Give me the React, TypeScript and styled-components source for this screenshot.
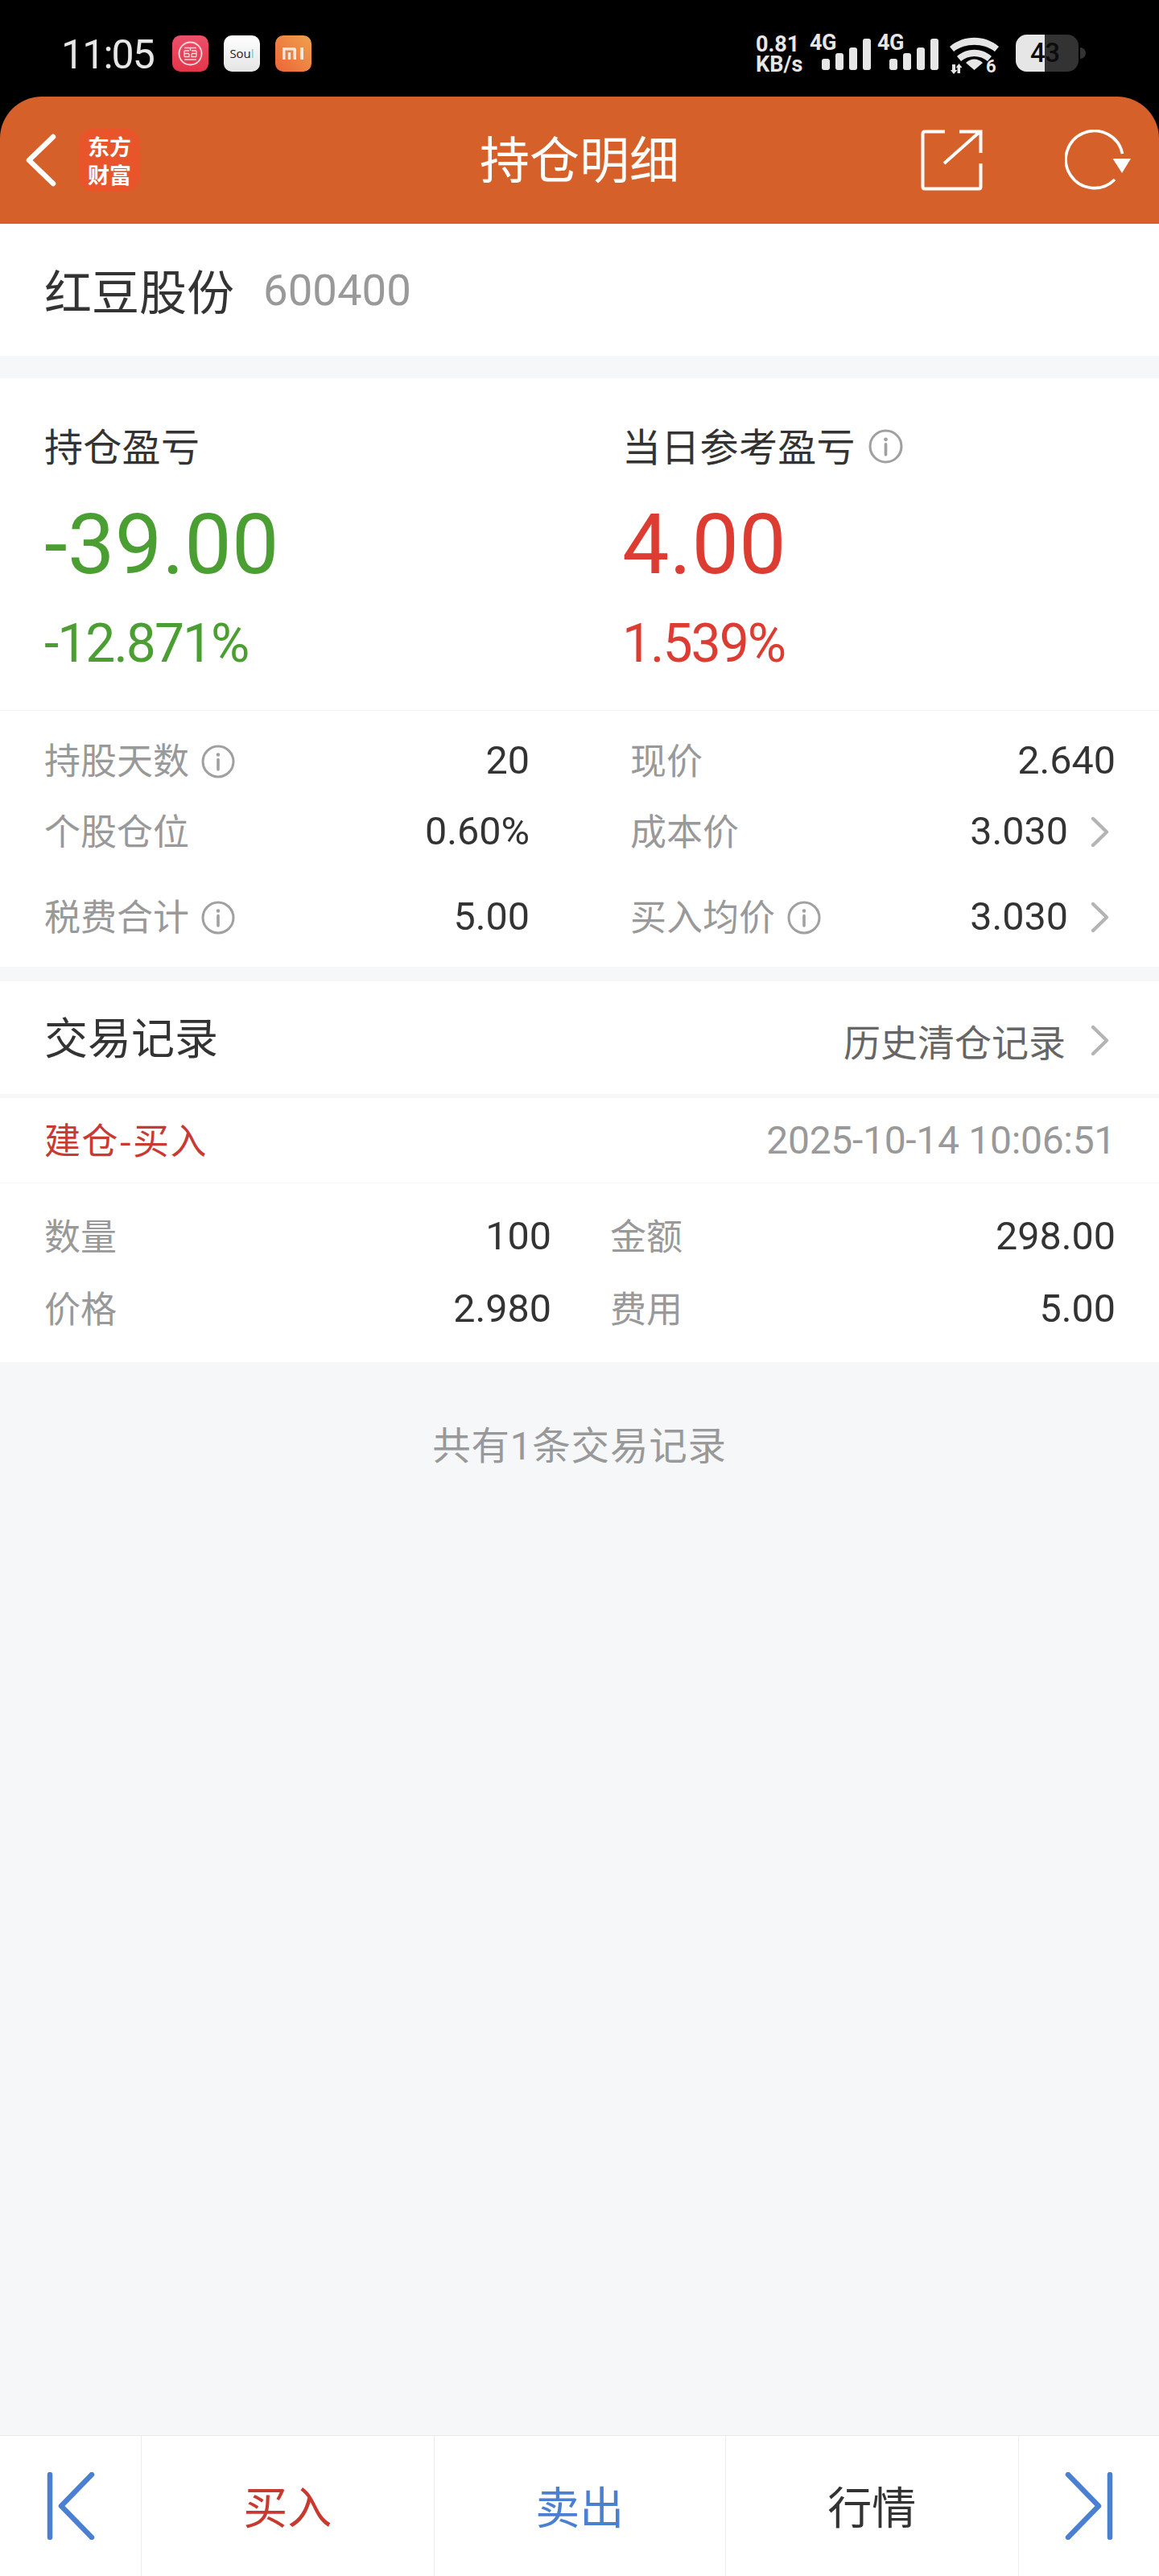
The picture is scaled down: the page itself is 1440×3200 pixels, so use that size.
import React from 'react';
import styled, { createGlobalStyle } from 'styled-components';

const GlobalStyle = createGlobalStyle`
  html, body { margin: 0; padding: 0; background: #f6f7f9; }
  * { box-sizing: border-box; }
  body { font-family: Roboto, "Noto Sans CJK SC", sans-serif; }
`;

const CJK = `"Noto Sans CJK SC", Roboto, sans-serif`;
const NUM = `Roboto, "Noto Sans CJK SC", sans-serif`;

const Page = styled.div`
  width: 1440px;
  height: 3200px;
  display: flex;
  flex-direction: column;
  background: #f6f7f9;
  overflow: hidden;
`;

/* ---------- status bar ---------- */
const StatusBar = styled.div`
  height: 120px;
  flex: none;
  background: #000;
  display: flex;
  align-items: flex-start;
  padding: 43px 91px 0 76px;
  color: #e6e6e6;
`;
const Clock = styled.div`
  margin-top: 2px;
  font: 400 50px/46px ${NUM};
  letter-spacing: -1.9px;
  width: 138px;
`;
const AppIcon = styled.div<{ $bg: string }>`
  width: 45px;
  height: 45px;
  margin: 1px 19px 0 0;
  border-radius: 10px;
  background: ${(p) => p.$bg};
  display: flex;
  align-items: center;
  justify-content: center;
`;
const SoulText = styled.span`
  font: 400 15px/1 "Open Sans", sans-serif;
  color: #222;
  & > i { font-style: normal; color: #6fd0b0; }
`;
const StatusRight = styled.div`
  margin-left: auto;
  display: flex;
  align-items: flex-start;
`;
const Speed = styled.div`
  width: 61px;
  margin-right: 6px;
  font: 700 27px/25px ${NUM};
  white-space: nowrap;
`;
const Signal = styled.div`
  width: 74px;
  height: 44px;
  margin-right: 10px;
  display: flex;
  align-items: flex-end;
  position: relative;
`;
const SignalLabel = styled.span`
  position: absolute;
  left: 0;
  top: 0;
  font: 700 27px/21px ${NUM};
  letter-spacing: -0.4px;
`;
const Bars = styled.div`
  margin-left: 15px;
  display: flex;
  align-items: flex-end;
  gap: 7px;
`;
const Bar = styled.span<{ $h: number }>`
  width: 10px;
  height: ${(p) => p.$h}px;
  border-radius: 3px;
  background: #e6e6e6;
`;
const Wifi = styled.svg`
  width: 62px;
  height: 46px;
  margin: 4px 0 0 6px;
  flex: none;
  overflow: visible;
`;
const Battery = styled.div`
  width: 78px;
  height: 46px;
  margin: 0 0 0 20px;
  border-radius: 14px;
  overflow: hidden;
  position: relative;
  display: flex;
  background: #333;
`;
const BatteryFill = styled.div`
  width: 36px;
  background: #e6e6e6;
`;
const BatteryText = styled.span`
  position: absolute;
  left: 18px;
  top: 0;
  font: 500 33px/46px ${NUM};
  color: #0c0c0c;
  letter-spacing: -0.5px;
`;
const BatteryNub = styled.div`
  width: 7px;
  height: 14px;
  margin: 16px 0 0 2px;
  background: #333;
  border-radius: 0 7px 7px 0;
`;

/* ---------- header ---------- */
const Header = styled.header`
  height: 158px;
  flex: none;
  background: #000;
`;
const HeaderInner = styled.div`
  height: 100%;
  background: #d66029;
  border-radius: 52px 52px 0 0;
  display: flex;
  align-items: center;
  position: relative;
  padding: 0 33px 0 30px;
`;
const Brand = styled.div`
  width: 76px;
  height: 78px;
  margin-left: 28px;
  background: #e9552b;
  border-radius: 18px;
  display: flex;
  flex-direction: column;
  align-items: center;
  justify-content: center;
  font: 700 27px/35px ${CJK};
  color: #fff;
`;
const Title = styled.h1`
  position: absolute;
  left: 0;
  right: 0;
  top: 40px;
  margin: 0;
  text-align: center;
  font: 400 62px/70px ${CJK};
  color: #fff;
  pointer-events: none;
`;
const HeaderActions = styled.div`
  margin-left: auto;
  display: flex;
  align-items: center;
  gap: 102px;
`;

/* ---------- stock row ---------- */
const StockRow = styled.section`
  height: 164px;
  flex: none;
  background: #fff;
  display: flex;
  align-items: center;
  padding: 0 55px;
`;
const StockName = styled.span`
  font: 400 59px/70px ${CJK};
  color: #333;
`;
const StockCode = styled.span`
  font: 400 54.5px/70px ${NUM};
  color: #999;
  margin-left: 36px;
`;

/* ---------- summary ---------- */
const Summary = styled.section`
  margin-top: 28px;
  height: 413px;
  flex: none;
  background: #fff;
  border-bottom: 1px solid #f3f3f4;
  display: grid;
  grid-template-columns: 718px 1fr;
  padding: 52px 0 0 55px;
`;
const SummaryCol = styled.div`
  display: flex;
  flex-direction: column;
`;
const SummaryLabel = styled.div`
  display: flex;
  align-items: center;
  gap: 16px;
  font: 400 48px/60px ${CJK};
  letter-spacing: 0.3px;
  color: #333;
`;
const BigNumber = styled.div<{ $color: string }>`
  margin-top: 40px;
  font: 400 104px/110px ${NUM};
  letter-spacing: 0.3px;
  color: ${(p) => p.$color};
`;
const Percent = styled.div<{ $color: string }>`
  margin-top: 28px;
  font: 400 66px/80px ${NUM};
  letter-spacing: -2px;
  color: ${(p) => p.$color};
`;

/* ---------- metrics ---------- */
const Metrics = styled.section`
  height: 318px;
  flex: none;
  background: #fff;
  padding: 18px 54px 0 55px;
  display: grid;
  grid-template-columns: 603px 603px;
  grid-template-rows: 88px 88px 124px;
  column-gap: 125px;
`;
const Cell = styled.div`
  display: flex;
  align-items: center;
`;
const CellLabel = styled.span`
  margin-top: -4px;
  display: flex;
  align-items: center;
  gap: 15px;
  font: 400 45px/60px ${CJK};
  color: #999;
`;
const CellValue = styled.span`
  margin-left: auto;
  font: 400 48.5px/60px ${NUM};
  color: #333;
`;
const CellChevron = styled.svg`
  width: 25px;
  height: 41px;
  margin: 0 7px 0 27px;
  flex: none;
`;
const InfoSvg = styled.svg`
  margin-top: 5px;
  flex: none;
`;

/* ---------- trades ---------- */
const TradeHeader = styled.section`
  margin-top: 18px;
  height: 140px;
  flex: none;
  background: #fff;
  display: flex;
  align-items: center;
  padding: 0 54px 0 55px;
`;
const TradeTitle = styled.h2`
  margin: -5px 0 0;
  font: 400 54px/70px ${CJK};
  color: #333;
`;
const HistoryLink = styled.span`
  margin: 6px 0 0 auto;
  display: flex;
  align-items: center;
  font: 400 46px/60px ${CJK};
  color: #666;
  & > svg { margin-left: 30px; }
`;
const RecordHead = styled.div`
  margin-top: 5px;
  height: 106px;
  flex: none;
  background: #fff;
  border-bottom: 1px solid #f8f8f9;
  display: flex;
  align-items: center;
  justify-content: space-between;
  padding: 0 54px 0 55px;
`;
const RecordType = styled.span`
  margin-top: -3px;
  font: 400 45px/60px ${CJK};
  letter-spacing: 1.500px;
  color: #c83a32;
`;
const RecordTime = styled.span`
  font: 400 48px/60px ${NUM};
  letter-spacing: -0.3px;
  color: #999;
`;
const RecordBody = styled.div`
  height: 222px;
  flex: none;
  background: #fff;
  padding: 21px 54px 0 55px;
  display: grid;
  grid-template-columns: 630px 628px;
  grid-template-rows: 90px 90px;
  column-gap: 73px;
`;
const FootNote = styled.div`
  margin-top: 75px;
  text-align: center;
  font: 400 47.5px/60px ${NUM};
  letter-spacing: 0.8px;
  color: #999;
`;

/* ---------- bottom bar ---------- */
const BottomBar = styled.nav`
  margin-top: auto;
  height: 175px;
  flex: none;
  background: #fff;
  border-top: 1px solid #e8e9ec;
  display: grid;
  grid-template-columns: 175px 363.5px 362.5px 363.5px 175.5px;
`;
const BottomCell = styled.div<{ $color?: string }>`
  display: flex;
  align-items: center;
  justify-content: center;
  padding-bottom: 4px;
  font: 400 55px/60px ${CJK};
  color: ${(p) => p.$color || '#333'};
  border-left: 1px solid #ebecef;
  &:first-child { border-left: 0; padding-bottom: 0; }
  &:last-child { padding-bottom: 0; }
`;

/* ---------- icons ---------- */
const InfoIcon = ({ size = 42 }: { size?: number }) => (
  <InfoSvg width={size} height={size} viewBox="0 0 42 42" fill="none">
    <circle cx="21" cy="21" r="19" stroke="#a0a0a0" strokeWidth="3" />
    <circle cx="21" cy="12.5" r="2.3" fill="#a0a0a0" />
    <path d="M21 18.5V31" stroke="#a0a0a0" strokeWidth="3.6" strokeLinecap="round" />
  </InfoSvg>
);

const Chevron = () => (
  <CellChevron viewBox="0 0 25 41" fill="none">
    <path d="M4 4L21 20.5L4 37" stroke="#b4b4b4" strokeWidth="4.4" strokeLinecap="round" strokeLinejoin="round" />
  </CellChevron>
);

const BackIcon = () => (
  <svg width="40" height="66" viewBox="0 0 40 66" fill="none">
    <path d="M36 4L6 33L36 62" stroke="#fff" strokeWidth="6.5" strokeLinecap="round" strokeLinejoin="round" />
  </svg>
);

const ShareIcon = () => (
  <svg width="77" height="76" viewBox="0 0 77 76" fill="none">
    <path d="M30 2.5H5Q2.500 2.500 2.500 5V71Q2.500 73.500 5 73.500H72Q74.500 73.500 74.500 71V42" stroke="#fff" strokeWidth="4" />
    <path d="M29 42L73 3M48 2.500H74.500V29" stroke="#fff" strokeWidth="4" />
  </svg>
);

const RefreshIcon = () => (
  <svg width="84" height="76" viewBox="0 0 84 76" fill="none">
    <path d="M62 62A35.500 35.500 0 1 1 71.500 30" stroke="#fff" strokeWidth="3.6" />
    <path d="M59.500 36H82L71 54Z" fill="#fff" />
  </svg>
);

const NavIcon = ({ flip }: { flip?: boolean }) => (
  <svg width="60" height="84" viewBox="0 0 60 84" fill="none" style={flip ? { transform: 'scaleX(-1)' } : undefined}>
    <path d="M4 3V81" stroke="#4a7fd1" strokeWidth="6.500" strokeLinecap="round" />
    <path d="M56 3L18 42L56 81" stroke="#4a7fd1" strokeWidth="6.500" strokeLinecap="round" strokeLinejoin="round" />
  </svg>
);

const IcbcMark = () => (
  <svg width="31" height="31" viewBox="0 0 31 31" fill="none" stroke="#f7d9de">
    <circle cx="15.500" cy="15.500" r="14" strokeWidth="1.800" />
    <path d="M8 8.500H23M15.500 8.500V12M8 12H14M17 12H23M8 12V15.500H14M23 12V15.500H17M8 19.500V15.500M23 19.500V15.500M8 19.500H14V16M23 19.500H17V16M8 23H23" strokeWidth="1.300" />
  </svg>
);

const MiMark = () => (
  <svg width="27" height="15" viewBox="0 0 27 15" fill="#f8e7dc">
    <path d="M0 0H14Q17 0 17 3V15H13.500V3.500H3.500V15H0Z" />
    <rect x="6.800" y="6" width="3.400" height="9" />
    <rect x="22" y="0" width="4" height="15" />
  </svg>
);

const WifiIcon = () => (
  <Wifi viewBox="0 0 62 46" fill="#e6e6e6">
    <path d="M0 11C17 -4 44 -4 61 11L56 17C42 6 19 6 5 17Z" />
    <path d="M9 23C21 12 40 12 52 23L47 29C38 21 23 21 14 29Z" />
    <path d="M20 31C26 25 35 25 41 31L30.500 40Z" />
    <path d="M3 33H7V40H9.500L5 45L1 40H3Z" />
    <path d="M13 44H9.500V37H7.500L11.500 32L15.500 37H13Z" />
    <text x="45" y="43" fontFamily="Roboto, sans-serif" fontWeight="700" fontSize="22">6</text>
  </Wifi>
);

const SignalBlock = () => (
  <Signal>
    <SignalLabel>4G</SignalLabel>
    <Bars>
      <Bar $h={14} />
      <Bar $h={21} />
      <Bar $h={28} />
      <Bar $h={39} />
    </Bars>
  </Signal>
);

export default function App() {
  return (
    <Page>
      <GlobalStyle />
      <StatusBar>
        <Clock>11:05</Clock>
        <AppIcon $bg="linear-gradient(180deg,#ec5069,#e3354a)"><IcbcMark /></AppIcon>
        <AppIcon $bg="linear-gradient(180deg,#ffffff,#e4e4e4)"><SoulText>Sou<i>l</i></SoulText></AppIcon>
        <AppIcon $bg="linear-gradient(45deg,#ec6537,#efa14f)"><MiMark /></AppIcon>
        <StatusRight>
          <Speed>0.81<br />KB/s</Speed>
          <SignalBlock />
          <SignalBlock />
          <WifiIcon />
          <Battery>
            <BatteryFill />
            <BatteryText>43</BatteryText>
          </Battery>
          <BatteryNub />
        </StatusRight>
      </StatusBar>

      <Header>
        <HeaderInner>
          <BackIcon />
          <Brand><span>东方</span><span>财富</span></Brand>
          <Title>持仓明细</Title>
          <HeaderActions>
            <ShareIcon />
            <RefreshIcon />
          </HeaderActions>
        </HeaderInner>
      </Header>

      <StockRow>
        <StockName>红豆股份</StockName>
        <StockCode>600400</StockCode>
      </StockRow>

      <Summary>
        <SummaryCol>
          <SummaryLabel>持仓盈亏</SummaryLabel>
          <BigNumber $color="#4a9e32">-39.00</BigNumber>
          <Percent $color="#4a9e32">-12.871%</Percent>
        </SummaryCol>
        <SummaryCol>
          <SummaryLabel>当日参考盈亏<InfoIcon size={43} /></SummaryLabel>
          <BigNumber $color="#dc3c32">4.00</BigNumber>
          <Percent $color="#dc3c32">1.539%</Percent>
        </SummaryCol>
      </Summary>

      <Metrics>
        <Cell><CellLabel>持股天数<InfoIcon /></CellLabel><CellValue>20</CellValue></Cell>
        <Cell><CellLabel>现价</CellLabel><CellValue>2.640</CellValue></Cell>
        <Cell><CellLabel>个股仓位</CellLabel><CellValue>0.60%</CellValue></Cell>
        <Cell><CellLabel>成本价</CellLabel><CellValue>3.030</CellValue><Chevron /></Cell>
        <Cell><CellLabel>税费合计<InfoIcon /></CellLabel><CellValue>5.00</CellValue></Cell>
        <Cell><CellLabel>买入均价<InfoIcon /></CellLabel><CellValue>3.030</CellValue><Chevron /></Cell>
      </Metrics>

      <TradeHeader>
        <TradeTitle>交易记录</TradeTitle>
        <HistoryLink>历史清仓记录<Chevron /></HistoryLink>
      </TradeHeader>

      <RecordHead>
        <RecordType>建仓-买入</RecordType>
        <RecordTime>2025-10-14 10:06:51</RecordTime>
      </RecordHead>
      <RecordBody>
        <Cell><CellLabel>数量</CellLabel><CellValue>100</CellValue></Cell>
        <Cell><CellLabel>金额</CellLabel><CellValue>298.00</CellValue></Cell>
        <Cell><CellLabel>价格</CellLabel><CellValue>2.980</CellValue></Cell>
        <Cell><CellLabel>费用</CellLabel><CellValue>5.00</CellValue></Cell>
      </RecordBody>

      <FootNote>共有1条交易记录</FootNote>

      <BottomBar>
        <BottomCell><NavIcon /></BottomCell>
        <BottomCell $color="#c8392f">买入</BottomCell>
        <BottomCell $color="#4a7fd1">卖出</BottomCell>
        <BottomCell>行情</BottomCell>
        <BottomCell><NavIcon flip /></BottomCell>
      </BottomBar>
    </Page>
  );
}
